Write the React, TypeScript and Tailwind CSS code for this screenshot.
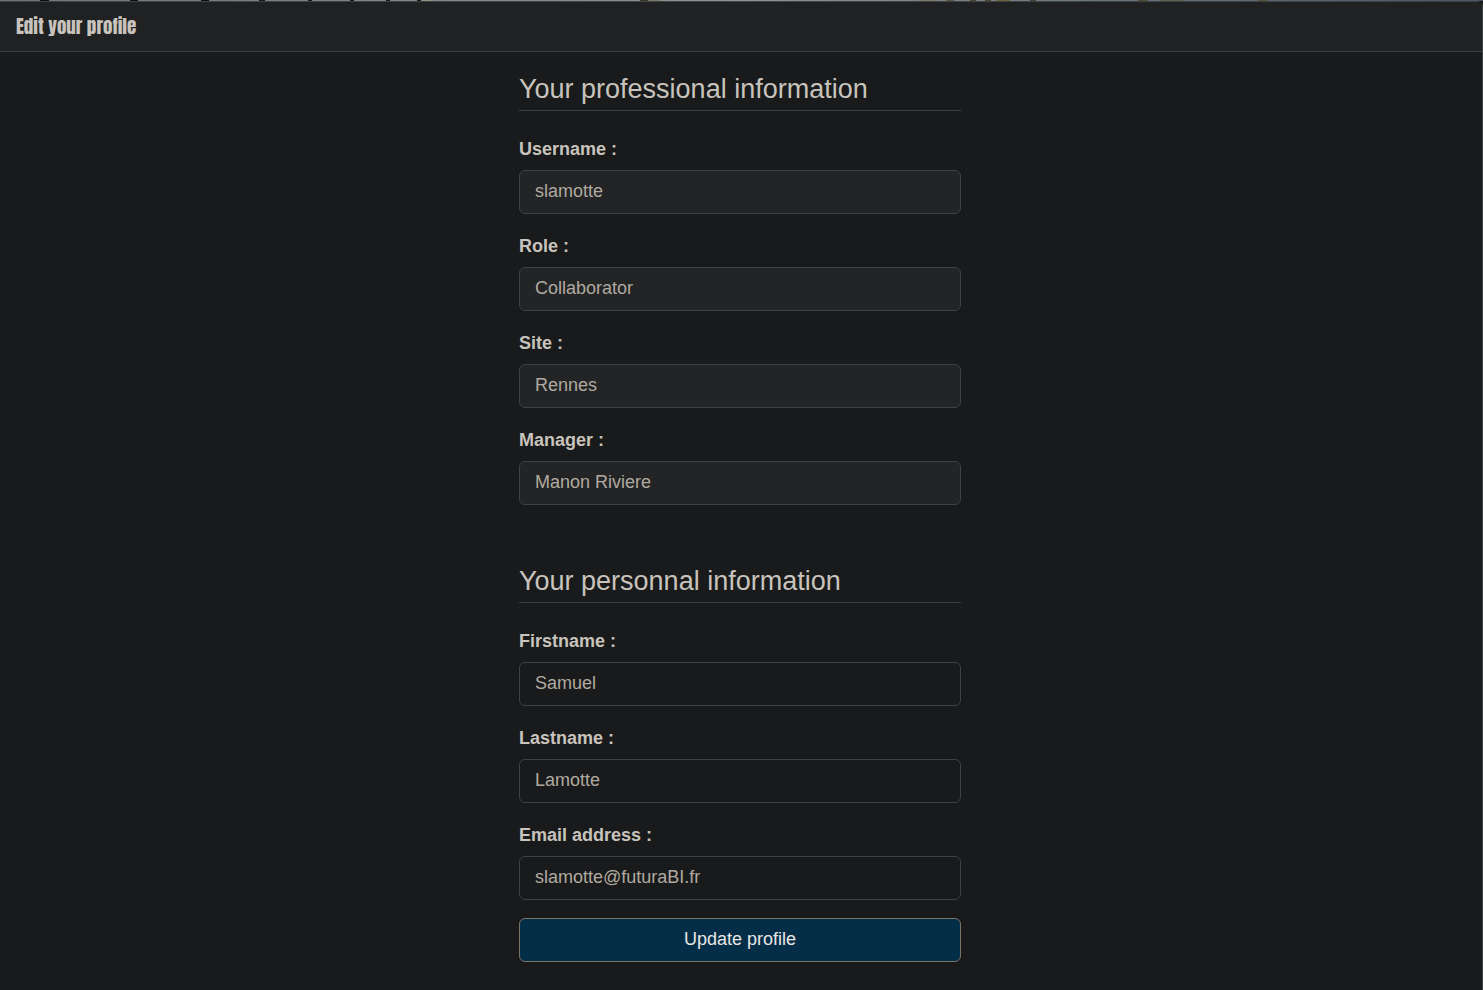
import { useId } from "react";

type FieldProps = { label: string; value: string; type?: string; disabled?: boolean };

function Field({ label, value, type = "text", disabled = false }: FieldProps) {
  const id = useId();
  return (
    <div className="mb-[18px]">
      <label htmlFor={id} className="mb-1.5 block text-[18px] leading-[29px] font-bold text-[#c8c3bc]">
        {label}
      </label>
      <input
        id={id}
        type={type}
        defaultValue={value}
        disabled={disabled}
        className="block h-11 w-full rounded-md border border-[#3e4245] bg-[#181a1b] px-[15px] pb-0.5 text-[18px] text-[#b1aaa0] outline-none disabled:bg-[#222425]"
      />
    </div>
  );
}

function SectionTitle({ children }: { children: string }) {
  return (
    <h2 className="mb-6 border-b border-[#3a3e41] pb-1 text-[27px] leading-[34px] text-[#c8c3bc]">
      {children}
    </h2>
  );
}

/* Sliver of the backdrop photo that shows above the card: [x, width, colour] */
const specks: [number, number, string][] = [
  [40, 9, "#0b0c0c"],
  [130, 8, "#0b0c0c"],
  [201, 8, "#0b0c0c"],
  [259, 6, "#141616"],
  [308, 4, "#141616"],
  [350, 4, "#141616"],
  [386, 4, "#141616"],
  [417, 4, "#141616"],
  [422, 10, "#8f937c"],
  [640, 8, "#3a3524"],
  [648, 12, "#7b7a60"],
  [918, 18, "#7d7b66"],
  [946, 8, "#5a553c"],
  [970, 6, "#4a442f"],
  [985, 6, "#4a442f"],
  [996, 14, "#6f6438"],
  [1030, 6, "#453f2c"],
  [1138, 10, "#4f4932"],
  [1160, 24, "#5f6050"],
  [1258, 10, "#5a5138"],
];

function Backdrop() {
  return (
    <div className="h-px bg-linear-to-r from-[#6d7473] via-[#8e9492] to-[#4a5564]">
      <svg viewBox="0 0 1483 1" preserveAspectRatio="none" className="block h-px w-full" aria-hidden="true">
        {specks.map(([x, width, fill]) => (
          <rect key={x} x={x} y="0" width={width} height="1" fill={fill} />
        ))}
      </svg>
    </div>
  );
}

export default function App() {
  return (
    <div className="min-h-screen bg-[#181a1b] font-['Liberation_Sans',Arial,sans-serif]">
      <Backdrop />
      <main className="min-h-[calc(100vh-1px)] rounded-tr-md border-t border-r border-[#3e4446] bg-[#181a1b]">
        <header className="border-b border-[#3a3e41] bg-[#1f2122] px-4 py-3">
          <h1 className="font-['Anton','Liberation_Sans_Narrow','Liberation_Sans',sans-serif] text-[19px] leading-[25px] font-normal text-[#c8c3bc]">
            Edit your profile
          </h1>
        </header>
        <form
          className="mx-auto w-full max-w-[444px] pt-5 pr-0.5 pb-6"
          onSubmit={(e) => e.preventDefault()}
        >
          <section className="mb-[59px]">
            <SectionTitle>Your professional information</SectionTitle>
            <Field label="Username :" value="slamotte" disabled />
            <Field label="Role :" value="Collaborator" disabled />
            <Field label="Site :" value="Rennes" disabled />
            <Field label="Manager :" value="Manon Riviere" disabled />
          </section>
          <section>
            <SectionTitle>Your personnal information</SectionTitle>
            <Field label="Firstname :" value="Samuel" />
            <Field label="Lastname :" value="Lamotte" />
            <Field label="Email address :" value="slamotte@futuraBI.fr" type="email" />
          </section>
          <button
            type="submit"
            className="block h-11 w-full rounded-md border border-[#7b7467] bg-[#042d48] pb-0.5 text-[18px] text-[#e8e6e3]"
          >
            Update profile
          </button>
        </form>
      </main>
    </div>
  );
}
